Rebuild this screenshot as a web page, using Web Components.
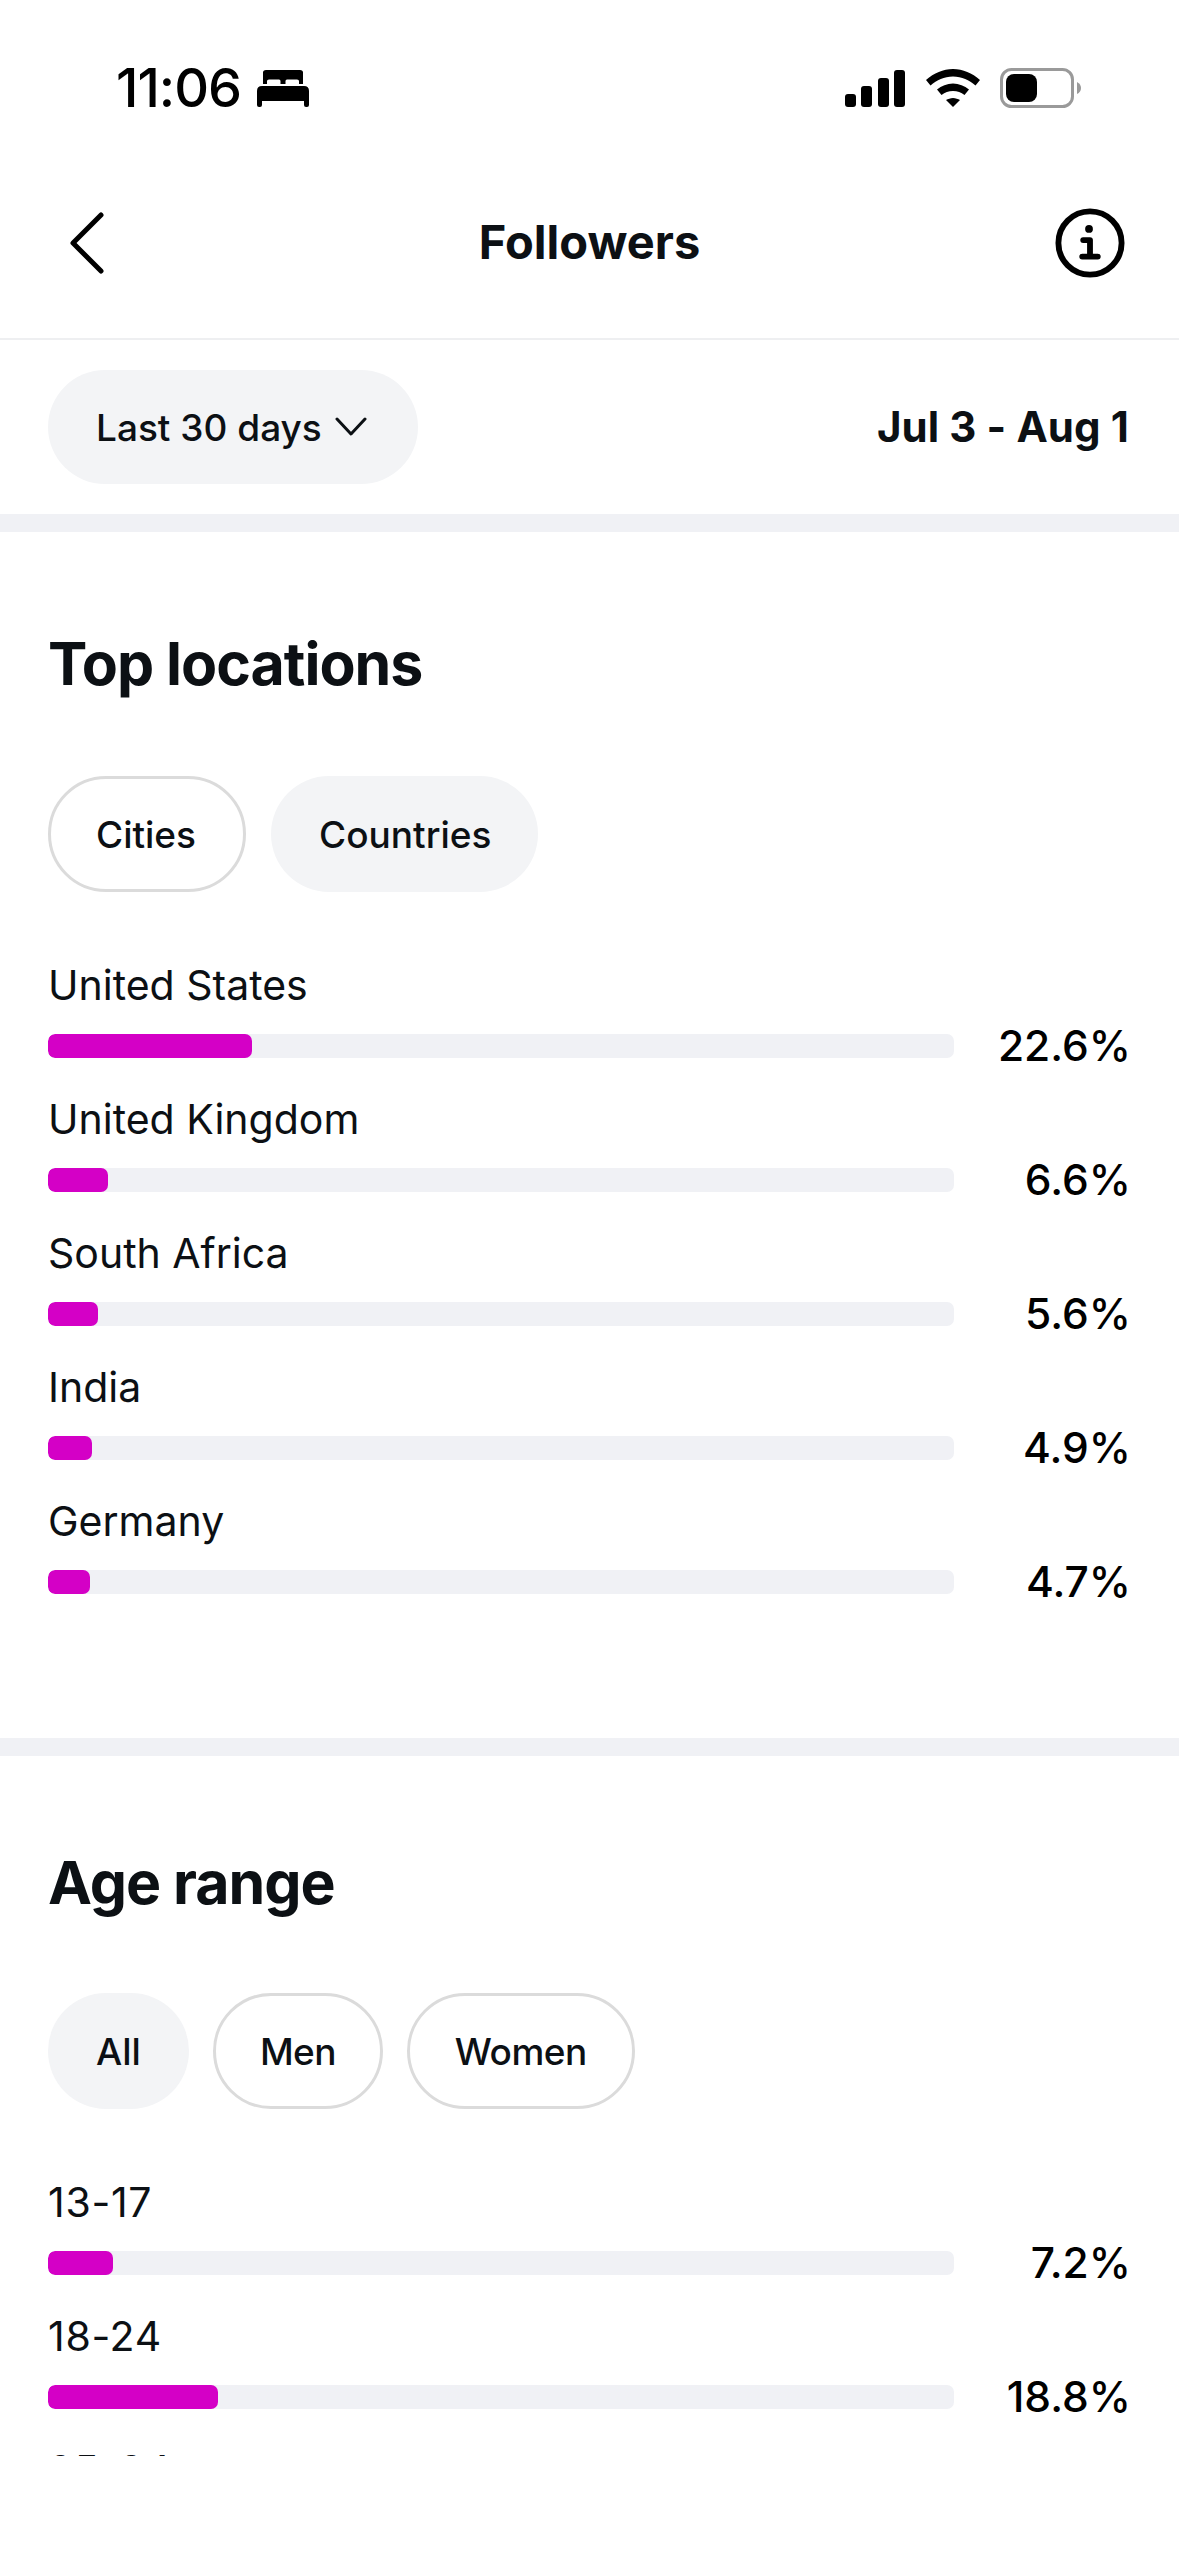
<!DOCTYPE html>
<html lang="en"><head><meta charset="utf-8"><title>Followers</title>
<style>
html,body{margin:0;background:#fff}
body{width:1179px;height:2556px;overflow:hidden;font-family:Inter,"Liberation Sans",sans-serif;color:#0c1014}
</style></head><body>
<insights-page>
  <status-bar></status-bar>
  <nav-header>Followers</nav-header>
  <date-filter range="Last 30 days" dates="Jul 3 - Aug 1"></date-filter>
  <insight-section heading="Top locations" bottom="144" chipgap="77" chipspace="25">
    <filter-chip slot="chips" outlined style="padding:0 47px 0 45px">Cities</filter-chip>
    <filter-chip slot="chips" style="padding:0 47px 0 48px">Countries</filter-chip>
    <bar-row label="United States" fill="204" pct="22.6%"></bar-row>
    <bar-row label="United Kingdom" fill="60" pct="6.6%"></bar-row>
    <bar-row label="South Africa" fill="50" pct="5.6%"></bar-row>
    <bar-row label="India" fill="44" pct="4.9%"></bar-row>
    <bar-row label="Germany" fill="42" pct="4.7%"></bar-row>
  </insight-section>
  <insight-section heading="Age range" top="92" bottom="0" chipgap="75" chipspace="24">
    <filter-chip slot="chips">All</filter-chip>
    <filter-chip slot="chips" outlined style="letter-spacing:-.6px">Men</filter-chip>
    <filter-chip slot="chips" outlined style="letter-spacing:-.5px;padding:0 45px">Women</filter-chip>
    <bar-row label="13-17" fill="65" pct="7.2%" style="letter-spacing:.7px"></bar-row>
    <bar-row label="18-24" fill="170" pct="18.8%" style="letter-spacing:.7px"></bar-row>
    <bar-row label="25-34" fill="0" pct="" style="letter-spacing:.7px"></bar-row>
  </insight-section>
</insights-page>
<script>
function def(name, css, html, init){
  customElements.define(name, class extends HTMLElement{
    constructor(){super();this.attachShadow({mode:'open'});}
    connectedCallback(){
      const a=n=>this.getAttribute(n);
      this.shadowRoot.innerHTML='<style>'+css+'</style>'+html(a,this);
      if(init)init(this,a);
    }
  });
}
def('insights-page',`:host{display:block;height:2456px;overflow:hidden;background:#fff}`,()=>`<slot></slot>`);
def('status-bar',`
:host{display:flex;align-items:center;height:176px;box-sizing:border-box;padding:0 0 0 116px;color:#000}
.t{font:500 54px/1 Inter,sans-serif;letter-spacing:-1px;width:126px;white-space:nowrap}
.bed{margin-left:15px;width:52px;height:37px;display:block}
.r{margin-left:auto;display:flex;align-items:center;padding-right:98px}
.sig{width:60px;height:37px;display:block}.wifi{width:54px;height:38px;margin-left:21px;display:block}
.bat{width:81px;height:40px;margin-left:20px;display:block}
`,()=>`<span class="t">11:06</span>
<svg class="bed" viewBox="0 0 52 37"><path fill="#000" d="M6 2.500Q6 0 9 0H43Q46 0 46 2.500V14H42V11Q42 9.500 40 9.500H30Q28.500 9.500 28.500 11V14H23.500V11Q23.500 9.500 22 9.500H12Q10 9.500 10 11V14H6ZM5 16H47Q52 16 52 21V35Q52 37 50 37H49Q47 37 47 35V31H5V35Q5 37 3 37H2Q0 37 0 35V21Q0 16 5 16Z"/></svg>
<span class="r">
<svg class="sig" viewBox="0 0 60 37" fill="#000"><rect x="0" y="24" width="11" height="13" rx="3"/><rect x="16" y="16" width="11" height="21" rx="3"/><rect x="33" y="8" width="11" height="29" rx="3"/><rect x="49" y="0" width="11" height="37" rx="3"/></svg>
<svg class="wifi" viewBox="0 0 54 38" fill="#000"><path d="M27 0C37 0 46 4 54 11L49.500 16.500C43 11 36 7.500 27 7.500S11 11 4.500 16.500L0 11C8 4 17 0 27 0Z"/><path d="M27 14.500C33 14.500 38.500 17 43 20.500L38.500 26C35 23.500 31.500 22 27 22S19 23.500 15.500 26L11 20.500C15.500 17 21 14.500 27 14.500Z"/><path d="M27 29C29.500 29 32 30 34 31L27 38L20 31C22 30 24.500 29 27 29Z"/></svg>
<svg class="bat" viewBox="0 0 81 40"><rect x="1.500" y="1.500" width="71" height="37" rx="10" fill="#fff" stroke="#9a9a9a" stroke-width="3"/><rect x="6" y="6" width="31" height="28" rx="8" fill="#000"/><path d="M77 14Q81 16 81 20T77 26Z" fill="#9a9a9a"/></svg>
</span>`);
def('nav-header',`
:host{display:grid;grid-template-columns:1fr auto 1fr;align-items:center;height:164px;box-sizing:border-box;padding:0 54px 28px 54px;border-bottom:2px solid #eeeff1;font:700 47px/1 Inter,sans-serif}
svg{display:block}.b{margin-left:16px}.i{justify-self:end}
span{display:block;padding-bottom:3px}
`,()=>`<svg class="b" width="34" height="62" viewBox="0 0 34 62"><path d="M31 3L3 31L31 59" fill="none" stroke="#000" stroke-width="5" stroke-linecap="round" stroke-linejoin="round"/></svg>
<span><slot></slot></span>
<svg class="i" width="70" height="70" viewBox="0 0 72 72"><circle cx="36" cy="36" r="32.500" fill="none" stroke="#000" stroke-width="6"/><circle cx="35" cy="21.500" r="4" fill="#000"/><path d="M29 33H36V50M28 50H44" fill="none" stroke="#000" stroke-width="6" stroke-linecap="round" stroke-linejoin="round"/></svg>`);
def('date-filter',`
:host{display:flex;align-items:center;justify-content:space-between;height:192px;box-sizing:border-box;padding:0 50px 0 48px;border-bottom:18px solid #f0f1f5}
.p{display:flex;align-items:center;height:114px;box-sizing:border-box;width:370px;padding-left:48px;border-radius:57px;background:#f3f4f6;font:500 37px/1 Inter,sans-serif;white-space:nowrap}
.p svg{margin-left:13px;display:block}
.d{font:700 42px/1 Inter,sans-serif;letter-spacing:.1px}
`,a=>`<div class="p"><span>${a('range')}</span><svg width="32" height="20" viewBox="0 0 32 20"><path d="M2 2L16 17L30 2" fill="none" stroke="#0c1014" stroke-width="3" stroke-linecap="round" stroke-linejoin="round"/></svg></div><div class="d">${a('dates')}</div>`);
def('insight-section',`
:host{display:block;padding:var(--t) 48px var(--b)}
h2{margin:0;font:700 59px/70px Inter,sans-serif;letter-spacing:-1px}
.c{display:flex;gap:var(--s);margin:var(--g) 0 55px}
.r{display:flex;flex-direction:column;gap:23px}
`,a=>`<h2>${a('heading')}</h2><div class="c"><slot name="chips"></slot></div><div class="r"><slot></slot></div>`,
(e,a)=>{e.style.setProperty('--t',(a('top')||97)+'px');e.style.setProperty('--b',(a('bottom')||0)+'px');e.style.setProperty('--g',(a('chipgap')||76)+'px');e.style.setProperty('--s',(a('chipspace')||24)+'px');if(a('bottom')!=='0')e.style.borderBottom='18px solid #f0f1f5';});
def('filter-chip',`
:host{display:flex;align-items:center;height:116px;box-sizing:border-box;padding:0 48px;border-radius:58px;background:#f3f4f6;font:500 37px/1 Inter,sans-serif}
:host([outlined]){background:#fff;border:3px solid #dbdbdb;padding:0 44px}
`,()=>`<slot></slot>`);
def('bar-row',`
:host{display:grid;grid-template-columns:906px 1fr;grid-template-rows:76px 24px;row-gap:11px;align-items:center}
.l{grid-column:1;font:400 41px/76px Inter,sans-serif;white-space:nowrap}
.t{grid-row:2;grid-column:1;height:24px;border-radius:7px;background:#f0f1f5;overflow:hidden}
.f{height:100%;border-radius:7px;background:#d400c6}
.p{grid-row:2;grid-column:2;justify-self:end;font:500 42.500px/24px Inter,sans-serif;color:#000;letter-spacing:0}
`,a=>`<div class="l">${a('label')}</div><div class="t"><div class="f" style="width:${a('fill')}px"></div></div><div class="p">${a('pct')}</div>`);
</script>
</body></html>
